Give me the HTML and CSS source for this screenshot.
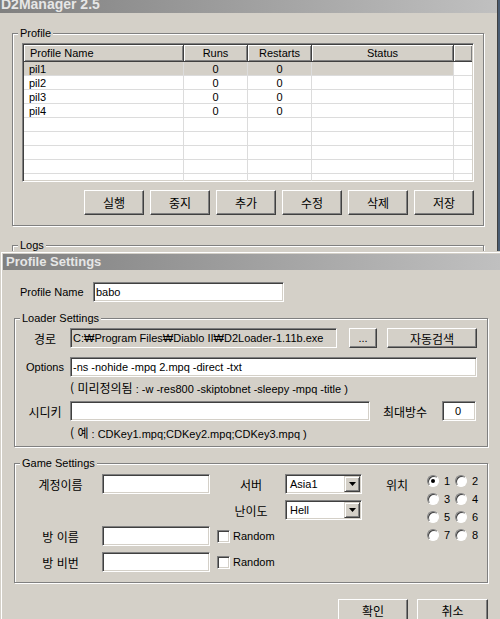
FILE: index.html
```html
<!DOCTYPE html>
<html lang="ko">
<head>
<meta charset="utf-8">
<title>D2Manager 2.5</title>
<link rel="stylesheet" href="styles.css">
</head>
<body>
<div class="mainwin">
  <div class="titlebar main-title">D2Manager 2.5</div>
  <div class="mainbody">
    <fieldset class="group profile-group">
      <legend>Profile</legend>
      <div class="listview">
        <div class="lv-head">
          <div class="th c1 left">Profile Name</div>
          <div class="th c2">Runs</div>
          <div class="th c3">Restarts</div>
          <div class="th c4">Status</div>
          <div class="th c5"></div>
        </div>
        <div class="lv-row sel"><div class="td c1">pil1</div><div class="td c2">0</div><div class="td c3">0</div><div class="td c4"></div><div class="td c5"></div></div>
        <div class="lv-row"><div class="td c1">pil2</div><div class="td c2">0</div><div class="td c3">0</div><div class="td c4"></div><div class="td c5"></div></div>
        <div class="lv-row"><div class="td c1">pil3</div><div class="td c2">0</div><div class="td c3">0</div><div class="td c4"></div><div class="td c5"></div></div>
        <div class="lv-row"><div class="td c1">pil4</div><div class="td c2">0</div><div class="td c3">0</div><div class="td c4"></div><div class="td c5"></div></div>
        <div class="lv-row"><div class="td c1"></div><div class="td c2"></div><div class="td c3"></div><div class="td c4"></div><div class="td c5"></div></div>
        <div class="lv-row"><div class="td c1"></div><div class="td c2"></div><div class="td c3"></div><div class="td c4"></div><div class="td c5"></div></div>
        <div class="lv-row"><div class="td c1"></div><div class="td c2"></div><div class="td c3"></div><div class="td c4"></div><div class="td c5"></div></div>
        <div class="lv-row"><div class="td c1"></div><div class="td c2"></div><div class="td c3"></div><div class="td c4"></div><div class="td c5"></div></div>
        <div class="lv-row"><div class="td c1"></div><div class="td c2"></div><div class="td c3"></div><div class="td c4"></div><div class="td c5"></div></div>
      </div>
      <div class="btnrow">
        <button class="btn mbtn ko">실행</button>
        <button class="btn mbtn ko">중지</button>
        <button class="btn mbtn ko">추가</button>
        <button class="btn mbtn ko">수정</button>
        <button class="btn mbtn ko">삭제</button>
        <button class="btn mbtn ko">저장</button>
      </div>
    </fieldset>
    <fieldset class="group logs-group">
      <legend>Logs</legend>
    </fieldset>
  </div>
</div>

<div class="dialog">
  <div class="dlg-frame">
    <div class="titlebar dlg-title">Profile Settings</div>
    <div class="dlg-body">
      <div class="name-row">
        <span class="name-label">Profile Name</span>
        <div class="field name-input">babo</div>
      </div>

      <fieldset class="group dlg-group loader">
        <legend>Loader Settings</legend>
        <div class="frow">
          <span class="flabel ko">경로</span>
          <div class="field readonly path">C:₩Program Files₩Diablo II₩D2Loader-1.11b.exe</div>
          <button class="btn dots">...</button>
          <button class="btn auto ko">자동검색</button>
        </div>
        <div class="frow opt-row">
          <span class="flabel">Options</span>
          <div class="field opts">-ns -nohide -mpq 2.mpq -direct -txt</div>
        </div>
        <div class="hint hint1">
          <span class="flabel"></span>
          <span class="hint-text"><span class="ko">( 미리정의됨</span> : -w -res800 -skiptobnet -sleepy -mpq -title )</span>
        </div>
        <div class="frow cd-row">
          <span class="flabel ko">시디키</span>
          <div class="field cdkey"></div>
          <span class="max-label ko">최대방수</span>
          <div class="field max-input">0</div>
        </div>
        <div class="hint hint2">
          <span class="flabel"></span>
          <span class="hint-text"><span class="ko">( 예</span> : CDKey1.mpq;CDKey2.mpq;CDKey3.mpq )</span>
        </div>
      </fieldset>

      <fieldset class="group dlg-group game">
        <legend>Game Settings</legend>
        <div class="ggrid">
          <span class="glabel r1 ko">계정이름</span>
          <div class="field gin r1"></div>
          <span class="clabel r1 ko">서버</span>
          <div class="combo r1"><span class="combo-text">Asia1</span><span class="combo-btn"><svg width="7" height="4" viewBox="0 0 7 4"><polygon points="0,0 7,0 3.5,4" fill="#000"/></svg></span></div>
          <span class="plabel ko">위치</span>
          <div class="radios">
            <span class="radio-item"><span class="radio on"></span>1</span>
            <span class="radio-item"><span class="radio"></span>2</span>
            <span class="radio-item"><span class="radio"></span>3</span>
            <span class="radio-item"><span class="radio"></span>4</span>
            <span class="radio-item"><span class="radio"></span>5</span>
            <span class="radio-item"><span class="radio"></span>6</span>
            <span class="radio-item"><span class="radio"></span>7</span>
            <span class="radio-item"><span class="radio"></span>8</span>
          </div>

          <span class="clabel r2 ko">난이도</span>
          <div class="combo r2"><span class="combo-text">Hell</span><span class="combo-btn"><svg width="7" height="4" viewBox="0 0 7 4"><polygon points="0,0 7,0 3.5,4" fill="#000"/></svg></span></div>

          <span class="glabel r3 ko">방 이름</span>
          <div class="field gin r3"></div>
          <label class="check r3"><span class="checkbox"></span>Random</label>

          <span class="glabel r4 ko">방 비번</span>
          <div class="field gin r4"></div>
          <label class="check r4"><span class="checkbox"></span>Random</label>
        </div>
      </fieldset>

      <div class="dlg-buttons">
        <button class="btn okbtn ko">확인</button>
        <button class="btn cancelbtn ko">취소</button>
      </div>
    </div>
  </div>
</div>
</body>
</html>
```

FILE: styles.css
```css
* { box-sizing: border-box; }
html, body { margin: 0; padding: 0; }
body {
  width: 500px;
  height: 619px;
  overflow: hidden;
  background: #4a5c72;
  font-family: "Liberation Sans", "Noto Sans CJK KR", sans-serif;
  font-size: 11px;
  line-height: 13px;
  color: #000;
}
.ko { font-family: "Noto Sans CJK KR", "Liberation Sans", sans-serif; font-size: 12px; }

/* ---------- title bars ---------- */
.titlebar {
  background: linear-gradient(to right, #808080, #c0c0c0);
  color: #e6e6e6;
  font-weight: bold;
  white-space: nowrap;
}

/* ---------- main window ---------- */
.mainwin {
  width: 498px;
  height: 251px;
  overflow: hidden;
  background: #d4d0c8;
  border-right: 1px solid #404040;
}
.main-title {
  height: 18px;
  margin-top: -5px;
  line-height: 18px;
  font-size: 14px;
  padding-left: 1px;
}
.mainbody { padding: 14px 0 0 12px; }

/* ---------- group boxes ---------- */
.group {
  margin: 0;
  min-width: 0;
  border: 1px solid #808080;
  box-shadow: inset 1px 1px 0 #fff, 1px 1px 0 #fff;
  padding: 4px 9px 10px 9px;
}
.group > legend {
  margin-left: -4px;
  padding: 0 2px;
  line-height: 12px;
  font-size: 11px;
  background: #d4d0c8;
}
.profile-group { width: 472px; }
.logs-group { width: 472px; height: 60px; margin-top: 13px; }

/* ---------- list view ---------- */
.listview {
  width: 452px;
  height: 139px;
  overflow: hidden;
  background: #fff;
  border: 1px solid;
  border-color: #808080 #fff #fff #808080;
  padding: 1px;
  box-shadow: inset 1px 1px 0 #404040, inset -1px -1px 0 #d4d0c8;
}
.lv-head, .lv-row {
  display: grid;
  grid-template-columns: 160px 64px 64px 142px 18px;
}
.th {
  height: 17px;
  background: #d4d0c8;
  border-right: 1px solid #404040;
  border-bottom: 1px solid #404040;
  box-shadow: inset 1px 1px 0 #fff, inset -1px -1px 0 #808080;
  text-align: center;
  line-height: 16px;
}
.th.left { text-align: left; padding-left: 6px; }
.th.c5 { border-right: none; }
.lv-row { height: 14px; }
.td {
  height: 14px;
  border-bottom: 1px solid #dcdcdc;
  border-right: 1px solid #dcdcdc;
  line-height: 14px;
  padding-left: 5px;
  white-space: nowrap;
}
.td.c2, .td.c3 { text-align: center; padding-left: 0; }
.td.c5 { border-right: none; }
.lv-row.sel .td { background: #d4d0c8; }
.lv-row.sel .td.c5 { background: #fff; }

/* ---------- buttons ---------- */
button { font: inherit; margin: 0; padding: 0; color: #000; }
.btn {
  background: #d4d0c8;
  border: 1px solid;
  border-color: #fff #404040 #404040 #fff;
  box-shadow: inset -1px -1px 0 #808080;
  display: flex;
  align-items: center;
  justify-content: center;
}
.btn.ko { font-size: 12px; }
.btnrow {
  width: 452px;
  margin-top: 8px;
  display: flex;
  justify-content: flex-end;
  gap: 6px;
}
.mbtn { width: 60px; height: 25px; }

/* ---------- dialog ---------- */
.dialog {
  height: 368px;
  background: #d4d0c8;
  border-top: 1px solid #d4d0c8;
  border-left: 1px solid #d4d0c8;
}
.dlg-frame {
  height: 100%;
  border-top: 1px solid #fff;
  border-left: 1px solid #fff;
  padding: 1px 0 0 1px;
}
.dlg-title {
  height: 16px;
  line-height: 16px;
  font-size: 13px;
  padding-left: 3px;
}
.dlg-body { padding: 12px 0 0 11px; }

/* fields */
.field {
  height: 20px;
  background: #fff;
  border: 1px solid;
  border-color: #808080 #fff #fff #808080;
  box-shadow: inset 1px 1px 0 #404040, inset -1px -1px 0 #d4d0c8;
  padding: 0 2px;
  line-height: 18px;
  white-space: nowrap;
  overflow: hidden;
}
.field.readonly { background: #d4d0c8; }

.name-row { display: flex; align-items: center; height: 20px; padding-left: 6px; }
.name-label { width: 73px; }
.name-input { width: 191px; }

.dlg-group { width: 474px; margin-top: 10px; }

.frow { display: flex; align-items: center; height: 20px; }
.flabel { width: 42px; margin-right: 4px; text-align: center; flex: none; }
.path { width: 267px; margin-right: 12px; }
.dots { width: 28px; height: 20px; margin-right: 10px; }
.auto { width: 90px; height: 20px; }
.opt-row { margin-top: 9px; }
.opts { width: 407px; }
.hint { display: flex; align-items: center; height: 12px; white-space: nowrap; }
.hint1 { margin-top: 5px; }
.hint2 { margin-top: 6px; }
.cd-row { margin-top: 7px; }
.cdkey { width: 300px; margin-right: 13px; }
.max-label { width: 59px; }
.max-input { width: 34px; padding-left: 12px; }
.loader { padding-bottom: 7px; }

/* game settings */
.game { padding-top: 5px; }
.ggrid {
  display: grid;
  grid-template-columns: 78px 115px 68px 77px 64px auto;
  grid-template-rows: repeat(4, 20px);
  row-gap: 6px;
  align-items: center;
}
.r1 { grid-row: 1; }
.r2 { grid-row: 2; }
.r3 { grid-row: 3; }
.r4 { grid-row: 4; }
.glabel { grid-column: 1; text-align: center; padding-right: 5px; }
.gin { grid-column: 2; width: 108px; }
.clabel { grid-column: 3; text-align: center; }
.check { grid-column: 3; display: flex; align-items: center; gap: 3px; }
.combo { grid-column: 4; }
.plabel { grid-column: 5; grid-row: 1; padding-left: 24px; }
.radios {
  grid-column: 6;
  grid-row: 1 / span 4;
  align-self: start;
  margin-top: -2px;
  margin-left: 1px;
  display: grid;
  grid-template-columns: 28px 28px;
  grid-auto-rows: 18px;
}

.combo {
  height: 20px;
  width: 77px;
  display: flex;
  background: #fff;
  border: 1px solid;
  border-color: #808080 #fff #fff #808080;
  box-shadow: inset 1px 1px 0 #404040, inset -1px -1px 0 #d4d0c8;
  padding: 1px;
}
.combo-text { flex: 1; padding-left: 3px; line-height: 16px; }
.combo-btn {
  width: 16px;
  height: 16px;
  background: #d4d0c8;
  border: 1px solid;
  border-color: #d4d0c8 #404040 #404040 #d4d0c8;
  box-shadow: inset 1px 1px 0 #fff, inset -1px -1px 0 #808080;
  display: flex;
  align-items: center;
  justify-content: center;
}

.checkbox {
  width: 13px;
  height: 13px;
  background: #fff;
  border: 1px solid;
  border-color: #808080 #fff #fff #808080;
  box-shadow: inset 1px 1px 0 #404040, inset -1px -1px 0 #d4d0c8;
  flex: none;
}

.radio-item { display: flex; align-items: center; gap: 5px; height: 18px; }
.radio {
  width: 12px;
  height: 12px;
  border-radius: 50%;
  background: #fff;
  border: 1px solid;
  border-color: #808080 #fff #fff #808080;
  box-shadow: inset 1px 1px 0 #404040;
  display: flex;
  align-items: center;
  justify-content: center;
  flex: none;
}
.radio.on::after {
  content: "";
  width: 4px;
  height: 4px;
  border-radius: 50%;
  background: #000;
}

.dlg-buttons {
  width: 474px;
  margin-top: 16px;
  display: flex;
  justify-content: flex-end;
  gap: 9px;
}
.okbtn { width: 70px; height: 23px; }
.cancelbtn { width: 71px; height: 23px; }
```
